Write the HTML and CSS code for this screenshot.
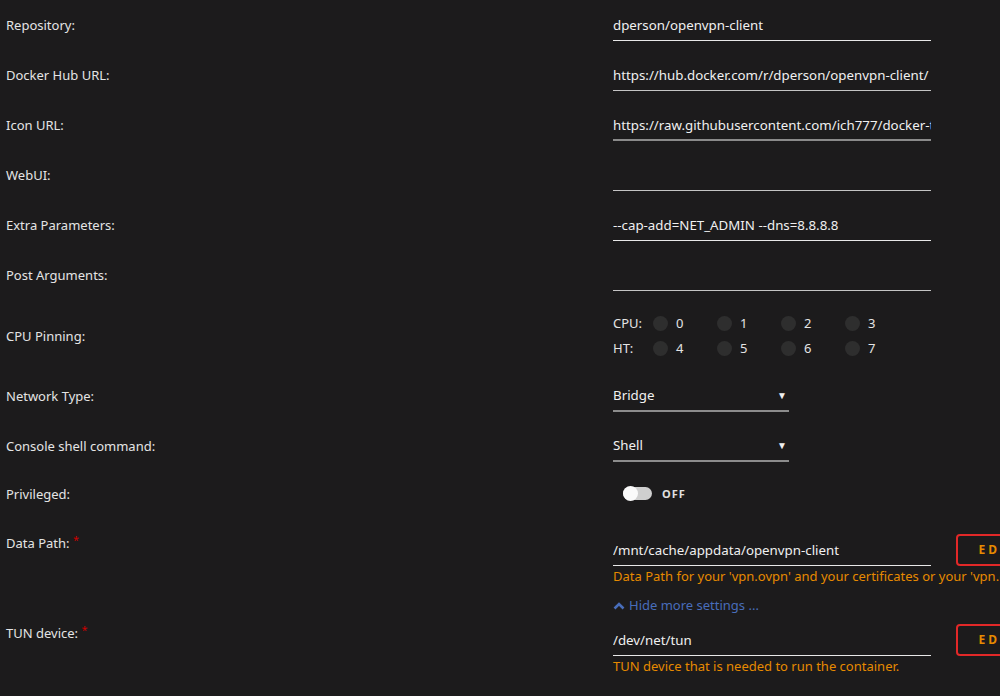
FILE: index.html
```html
<!DOCTYPE html>
<html lang="en">
<head>
    <meta charset="UTF-8">
    <title>Update Container</title>
    <link rel="stylesheet" href="styles.css">
</head>
<body>

    <div class="form">

        <div class="row">
            <div class="label">Repository:</div>
            <div class="field"><div class="input bright">dperson/openvpn-client</div></div>
        </div>

        <div class="row">
            <div class="label">Docker Hub URL:</div>
            <div class="field"><div class="input">https://hub.docker.com/r/dperson/openvpn-client/</div></div>
        </div>

        <div class="row">
            <div class="label">Icon URL:</div>
            <div class="field"><div class="input dim">https://raw.githubusercontent.com/ich777/docker-templates/master/ich777/images/openvpn.png</div></div>
        </div>

        <div class="row">
            <div class="label">WebUI:</div>
            <div class="field"><div class="input"></div></div>
        </div>

        <div class="row">
            <div class="label">Extra Parameters:</div>
            <div class="field"><div class="input bright">--cap-add=NET_ADMIN --dns=8.8.8.8</div></div>
        </div>

        <div class="row">
            <div class="label">Post Arguments:</div>
            <div class="field"><div class="input"></div></div>
        </div>

        <div class="row cpu-row">
            <div class="label">CPU Pinning:</div>
            <div class="field">
                <div class="cpus">
                    <div class="cpu-line">
                        <span class="cpu-name">CPU:</span>
                        <span class="core"><i class="dot"></i>0</span>
                        <span class="core"><i class="dot"></i>1</span>
                        <span class="core"><i class="dot"></i>2</span>
                        <span class="core"><i class="dot"></i>3</span>
                    </div>
                    <div class="cpu-line">
                        <span class="cpu-name">HT:</span>
                        <span class="core"><i class="dot"></i>4</span>
                        <span class="core"><i class="dot"></i>5</span>
                        <span class="core"><i class="dot"></i>6</span>
                        <span class="core"><i class="dot"></i>7</span>
                    </div>
                </div>
            </div>
        </div>

        <div class="row">
            <div class="label">Network Type:</div>
            <div class="field"><div class="select">Bridge<span class="arrow">&#9660;</span></div></div>
        </div>

        <div class="row">
            <div class="label">Console shell command:</div>
            <div class="field"><div class="select">Shell<span class="arrow">&#9660;</span></div></div>
        </div>

        <div class="row priv-row">
            <div class="label">Privileged:</div>
            <div class="field">
                <span class="switch"><i class="knob"></i></span>
                <span class="switch-text">OFF</span>
            </div>
        </div>

        <div class="row path-row">
            <div class="label">Data Path: <sup class="req">*</sup></div>
            <div class="field-col">
                <div class="path-line">
                    <div class="input bright">/mnt/cache/appdata/openvpn-client</div>
                    <div class="edit">EDIT</div>
                </div>
                <div class="help">Data Path for your 'vpn.ovpn' and your certificates or your 'vpn.conf' file.</div>
            </div>
        </div>

        <div class="row more-row">
            <div class="label"></div>
            <div class="field-col">
                <a class="more">
                    <svg width="12" height="9" viewBox="0 0 12 9"><path d="M1.5 7.5 L6 3 L10.5 7.5" fill="none" stroke="#486dba" stroke-width="2.6"/></svg>
                    Hide more settings ...
                </a>
            </div>
        </div>

        <div class="row path-row">
            <div class="label">TUN device: <sup class="req">*</sup></div>
            <div class="field-col">
                <div class="path-line">
                    <div class="input bright">/dev/net/tun</div>
                    <div class="edit">EDIT</div>
                </div>
                <div class="help">TUN device that is needed to run the container.</div>
            </div>
        </div>

    </div>

</body>
</html>
```

FILE: styles.css
```css
body {
    margin: 0px;
    overflow: hidden;
    background-color: #1c1b1c;
    color: #e4e4e4;
    font-family: "Noto Sans", "Open Sans", sans-serif;
    font-size: 13px;
}

.form {
    width: 1000px;
}

.row {
    display: flex;
    align-items: center;
    height: 50px;
}

.label {
    width: 607px;
    padding-left: 6px;
    flex-shrink: 0;
    line-height: 18px;
}

.field {
    display: flex;
    align-items: center;
}

.input {
    width: 318px;
    height: 30px;
    line-height: 31px;
    border-bottom: 1px solid #c4c4c4;
    white-space: nowrap;
    overflow: hidden;
    color: #f0f0f0;
    font-size: 13.3px;
}

.input.bright {
    border-bottom-color: #e8e8e8;
}

.input.dim {
    border-bottom: 2px solid #8a8a8a;
    height: 29px;
}

.cpu-row {
    height: 71px;
}

.cpu-line {
    display: flex;
    align-items: center;
    height: 25px;
}

.cpu-name {
    width: 40px;
}

.core {
    display: flex;
    align-items: center;
    width: 64px;
}

.dot {
    display: inline-block;
    width: 15px;
    height: 15px;
    border-radius: 50%;
    background-color: #2e2e2e;
    margin-right: 8px;
}

.select {
    width: 176px;
    height: 30px;
    line-height: 31px;
    border-bottom: 2px solid #8c8c8c;
    display: flex;
    justify-content: space-between;
    color: #f0f0f0;
    font-size: 13.3px;
}

.arrow {
    font-size: 10px;
    padding-right: 2px;
}

.priv-row {
    height: 45px;
}

.switch {
    display: inline-block;
    width: 29px;
    height: 13px;
    margin-left: 10px;
    border-radius: 7px;
    background-color: #cfcfcf;
    position: relative;
}

.knob {
    position: absolute;
    left: 0px;
    top: -1px;
    width: 15px;
    height: 15px;
    border-radius: 50%;
    background-color: #fafafa;
}

.switch-text {
    margin-left: 10px;
    font-size: 11px;
    font-weight: bold;
    letter-spacing: 1px;
    color: #e0e0e0;
}

.path-row {
    height: auto;
    align-items: flex-start;
    padding-top: 18px;
}

.path-row + .more-row + .path-row {
    padding-top: 0px;
}

.field-col {
    display: flex;
    flex-direction: column;
}

.path-line {
    display: flex;
    align-items: flex-start;
}

.path-line .input {
    height: 31px;
    line-height: 32px;
}

.edit {
    margin-left: 25px;
    width: 80px;
    height: 28px;
    line-height: 28px;
    border: 2px solid #e22828;
    border-radius: 4px;
    color: #e68a00;
    font-size: 12px;
    font-weight: bold;
    letter-spacing: 3px;
    text-align: center;
    flex-shrink: 0;
}

.help {
    color: #e68a00;
    line-height: 20px;
    white-space: nowrap;
}

.req {
    color: #cc0000;
    font-size: 11px;
    vertical-align: top;
    line-height: 12px;
}

.more-row {
    height: 38px;
}

.more {
    color: #486dba;
    display: flex;
    align-items: center;
    gap: 4px;
    cursor: pointer;
}
```
